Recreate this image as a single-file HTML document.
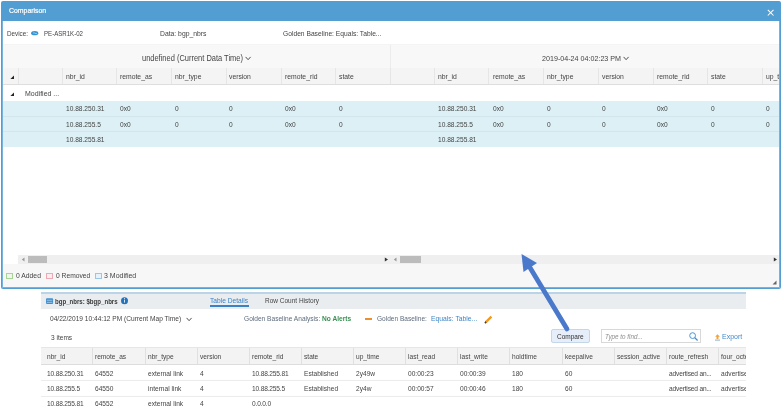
<!DOCTYPE html>
<html><head><meta charset="utf-8"><style>
html,body{margin:0;padding:0;width:783px;height:409px;overflow:hidden;background:#fff;}
body{position:relative;font-family:"Liberation Sans",sans-serif;}
.b{position:absolute;}
.t{position:absolute;white-space:nowrap;line-height:10px;height:10px;transform:translateZ(0) scaleX(0.9091);transform-origin:0 50%;}
.clip{position:absolute;overflow:hidden;}
</style></head><body>
<div class='b' style='left:1px;top:1px;width:780px;height:288px;background:#529dd2;border-radius:2px'></div>
<div class='b' style='left:3px;top:21px;width:776px;height:266px;background:#fff'></div>
<div class='b' style='left:2px;top:21px;width:1px;height:267px;background:#78b3df'></div>
<div class='b' style='left:779px;top:21px;width:1px;height:267px;background:#78b3df'></div>
<div class='b' style='left:2px;top:287px;width:778px;height:1px;background:#78b3df'></div>
<div class='t' id='title' style='left:9px;top:6.3px;font-size:7.59px;color:#fff;font-weight:400;-webkit-text-stroke:0.2px #fff'>Comparison</div>
<svg class='b' style='left:767px;top:9px' width='8' height='8' viewBox='0 0 8 8'><path d='M0.8 0.8L6.5 6.5M6.5 0.8L0.8 6.5' stroke='#fff' stroke-width='1.05'/></svg>
<div class='t' id='dev' style='left:7px;top:28.5px;font-size:6.93px;color:#444;font-weight:400;'>Device:</div>
<svg class='b' style='left:30.7px;top:31.3px' width='8' height='5' viewBox='0 0 8 5'><ellipse cx='3.7' cy='2.2' rx='3.6' ry='2.1' fill='#3794d4'/><path d='M2 2.2q1-1 2 0t2 0' fill='none' stroke='#cfe7f7' stroke-width='0.6'/></svg>
<div class='t' id='pe' style='left:44px;top:28.5px;font-size:6.71px;color:#444;font-weight:400;'>PE-ASR1K-02</div>
<div class='t' id='data' style='left:159.6px;top:28.8px;font-size:7.48px;color:#444;font-weight:400;'>Data: bgp_nbrs</div>
<div class='t' id='gb' style='left:282.5px;top:28.8px;font-size:7.37px;color:#444;font-weight:400;'>Golden Baseline: Equals: Table...</div>
<div class='b' style='left:3px;top:44px;width:776px;height:24px;background:#f8f8f8;border-top:1px solid #f4f4f4;box-sizing:border-box'></div>
<div class='b' style='left:390px;top:45px;width:1px;height:23px;background:#ececec'></div>
<div class='t' id='undef' style='left:142px;top:53.6px;font-size:8.23px;color:#444;font-weight:400;'>undefined (Current Data Time)</div>
<svg class='b' style='left:244.5px;top:56.4px' width='7' height='5' viewBox='0 0 7 5'><path d='M0.6 0.9L3.1 3.7L5.6 0.9' fill='none' stroke='#505050' stroke-width='1'/></svg>
<div class='t' id='date2' style='left:542px;top:53.8px;font-size:7.87px;color:#444;font-weight:400;'>2019-04-24 04:02:23 PM</div>
<svg class='b' style='left:622.8px;top:56.3px' width='7' height='5' viewBox='0 0 7 5'><path d='M0.6 0.9L3.1 3.7L5.6 0.9' fill='none' stroke='#505050' stroke-width='1'/></svg>
<div class='b' style='left:3px;top:68px;width:776px;height:16px;background:#f4f4f4'></div>
<div class='b' style='left:3px;top:84px;width:776px;height:1px;background:#dedede'></div>
<div class='b' style='left:18px;top:68px;width:1px;height:16px;background:#e6e6e6'></div>
<div class='b' style='left:62px;top:68px;width:1px;height:16px;background:#e6e6e6'></div>
<div class='b' style='left:116px;top:68px;width:1px;height:16px;background:#e6e6e6'></div>
<div class='b' style='left:171px;top:68px;width:1px;height:16px;background:#e6e6e6'></div>
<div class='b' style='left:226px;top:68px;width:1px;height:16px;background:#e6e6e6'></div>
<div class='b' style='left:281px;top:68px;width:1px;height:16px;background:#e6e6e6'></div>
<div class='b' style='left:335px;top:68px;width:1px;height:16px;background:#e6e6e6'></div>
<div class='b' style='left:390px;top:68px;width:1px;height:16px;background:#e6e6e6'></div>
<div class='b' style='left:434px;top:68px;width:1px;height:16px;background:#e6e6e6'></div>
<div class='b' style='left:488px;top:68px;width:1px;height:16px;background:#e6e6e6'></div>
<div class='b' style='left:543px;top:68px;width:1px;height:16px;background:#e6e6e6'></div>
<div class='b' style='left:598px;top:68px;width:1px;height:16px;background:#e6e6e6'></div>
<div class='b' style='left:653px;top:68px;width:1px;height:16px;background:#e6e6e6'></div>
<div class='b' style='left:707px;top:68px;width:1px;height:16px;background:#e6e6e6'></div>
<div class='b' style='left:762px;top:68px;width:1px;height:16px;background:#e6e6e6'></div>
<svg class='b' style='left:9.5px;top:75px' width='5' height='5' viewBox='0 0 5 5'><path d='M4 0.4V4H0.4Z' fill='#222'/></svg>
<div class='t' style='left:66px;top:71.7px;font-size:7.48px;color:#444;font-weight:400;'>nbr_id</div>
<div class='t' style='left:120px;top:71.7px;font-size:7.48px;color:#444;font-weight:400;'>remote_as</div>
<div class='t' style='left:174.7px;top:71.7px;font-size:7.48px;color:#444;font-weight:400;'>nbr_type</div>
<div class='t' style='left:229px;top:71.7px;font-size:7.48px;color:#444;font-weight:400;'>version</div>
<div class='t' style='left:284.5px;top:71.7px;font-size:7.48px;color:#444;font-weight:400;'>remote_rid</div>
<div class='t' style='left:338.7px;top:71.7px;font-size:7.48px;color:#444;font-weight:400;'>state</div>
<div class='clip' style='left:0;top:0;width:779px;height:200px'>
<div class='t' style='left:438px;top:71.7px;font-size:7.48px;color:#444;font-weight:400;'>nbr_id</div>
<div class='t' style='left:492.5px;top:71.7px;font-size:7.48px;color:#444;font-weight:400;'>remote_as</div>
<div class='t' style='left:547.2px;top:71.7px;font-size:7.48px;color:#444;font-weight:400;'>nbr_type</div>
<div class='t' style='left:602px;top:71.7px;font-size:7.48px;color:#444;font-weight:400;'>version</div>
<div class='t' style='left:656.5px;top:71.7px;font-size:7.48px;color:#444;font-weight:400;'>remote_rid</div>
<div class='t' style='left:711px;top:71.7px;font-size:7.48px;color:#444;font-weight:400;'>state</div>
<div class='t' style='left:766px;top:71.7px;font-size:7.48px;color:#444;font-weight:400;'>up_time</div>
</div>
<svg class='b' style='left:9.5px;top:91.6px' width='5' height='5' viewBox='0 0 5 5'><path d='M4 0.4V4H0.4Z' fill='#222'/></svg>
<div class='t' id='mod' style='left:25px;top:88.6px;font-size:7.70px;color:#444;font-weight:400;'>Modified ...</div>
<div class='b' style='left:3px;top:101px;width:776px;height:46px;background:#dcf0f6'></div>
<div class='b' style='left:3px;top:116px;width:776px;height:1px;background:#d3e6ee'></div>
<div class='b' style='left:3px;top:131px;width:776px;height:1px;background:#d3e6ee'></div>
<div class='t' style='left:66px;top:104.0px;font-size:7.26px;color:#444;font-weight:400;'>10.88.250.31</div>
<div class='t' style='left:120px;top:104.0px;font-size:7.26px;color:#444;font-weight:400;'>0x0</div>
<div class='t' style='left:174.7px;top:104.0px;font-size:7.26px;color:#444;font-weight:400;'>0</div>
<div class='t' style='left:229px;top:104.0px;font-size:7.26px;color:#444;font-weight:400;'>0</div>
<div class='t' style='left:284.5px;top:104.0px;font-size:7.26px;color:#444;font-weight:400;'>0x0</div>
<div class='t' style='left:338.7px;top:104.0px;font-size:7.26px;color:#444;font-weight:400;'>0</div>
<div class='clip' style='left:0;top:0;width:779px;height:200px'>
<div class='t' style='left:438px;top:104.0px;font-size:7.26px;color:#444;font-weight:400;'>10.88.250.31</div>
<div class='t' style='left:492.5px;top:104.0px;font-size:7.26px;color:#444;font-weight:400;'>0x0</div>
<div class='t' style='left:547.2px;top:104.0px;font-size:7.26px;color:#444;font-weight:400;'>0</div>
<div class='t' style='left:602px;top:104.0px;font-size:7.26px;color:#444;font-weight:400;'>0</div>
<div class='t' style='left:656.5px;top:104.0px;font-size:7.26px;color:#444;font-weight:400;'>0x0</div>
<div class='t' style='left:711px;top:104.0px;font-size:7.26px;color:#444;font-weight:400;'>0</div>
<div class='t' style='left:766px;top:104.0px;font-size:7.26px;color:#444;font-weight:400;'>0</div>
</div>
<div class='t' style='left:66px;top:119.5px;font-size:7.26px;color:#444;font-weight:400;'>10.88.255.5</div>
<div class='t' style='left:120px;top:119.5px;font-size:7.26px;color:#444;font-weight:400;'>0x0</div>
<div class='t' style='left:174.7px;top:119.5px;font-size:7.26px;color:#444;font-weight:400;'>0</div>
<div class='t' style='left:229px;top:119.5px;font-size:7.26px;color:#444;font-weight:400;'>0</div>
<div class='t' style='left:284.5px;top:119.5px;font-size:7.26px;color:#444;font-weight:400;'>0x0</div>
<div class='t' style='left:338.7px;top:119.5px;font-size:7.26px;color:#444;font-weight:400;'>0</div>
<div class='clip' style='left:0;top:0;width:779px;height:200px'>
<div class='t' style='left:438px;top:119.5px;font-size:7.26px;color:#444;font-weight:400;'>10.88.255.5</div>
<div class='t' style='left:492.5px;top:119.5px;font-size:7.26px;color:#444;font-weight:400;'>0x0</div>
<div class='t' style='left:547.2px;top:119.5px;font-size:7.26px;color:#444;font-weight:400;'>0</div>
<div class='t' style='left:602px;top:119.5px;font-size:7.26px;color:#444;font-weight:400;'>0</div>
<div class='t' style='left:656.5px;top:119.5px;font-size:7.26px;color:#444;font-weight:400;'>0x0</div>
<div class='t' style='left:711px;top:119.5px;font-size:7.26px;color:#444;font-weight:400;'>0</div>
<div class='t' style='left:766px;top:119.5px;font-size:7.26px;color:#444;font-weight:400;'>0</div>
</div>
<div class='t' style='left:66px;top:135.3px;font-size:7.26px;color:#444;font-weight:400;'>10.88.255.81</div>
<div class='clip' style='left:0;top:0;width:779px;height:200px'>
<div class='t' style='left:438px;top:135.3px;font-size:7.26px;color:#444;font-weight:400;'>10.88.255.81</div>
</div>
<div class='b' style='left:18px;top:255px;width:761px;height:9px;background:#efefef'></div>
<svg class='b' style='left:21px;top:257px' width='4' height='5' viewBox='0 0 4 5'><path d='M3.5 0.5V4.5L0.8 2.5Z' fill='#999'/></svg>
<div class='b' style='left:28px;top:256px;width:19px;height:7px;background:#bcbcbc'></div>
<svg class='b' style='left:384px;top:257px' width='5' height='5' viewBox='0 0 5 5'><path d='M0.8 0.5V4.5L4 2.5Z' fill='#333'/></svg>
<svg class='b' style='left:393px;top:257px' width='4' height='5' viewBox='0 0 4 5'><path d='M3.5 0.5V4.5L0.8 2.5Z' fill='#999'/></svg>
<div class='b' style='left:400px;top:256px;width:21px;height:7px;background:#bcbcbc'></div>
<svg class='b' style='left:773px;top:257px' width='5' height='5' viewBox='0 0 5 5'><path d='M0.8 0.5V4.5L4 2.5Z' fill='#333'/></svg>
<div class='b' style='left:3px;top:264px;width:776px;height:23px;background:#f7f7f7'></div>
<div class='b' style='left:6px;top:273px;width:7px;height:6px;border:1px solid #a8d596;background:#eef7ea;box-sizing:border-box'></div>
<div class='t' id='added' style='left:15.7px;top:271.1px;font-size:7.48px;color:#444;font-weight:400;'>0 Added</div>
<div class='b' style='left:46px;top:273px;width:7px;height:6px;border:1px solid #eeaab2;background:#fbedef;box-sizing:border-box'></div>
<div class='t' id='removed' style='left:55.6px;top:271.1px;font-size:7.37px;color:#444;font-weight:400;'>0 Removed</div>
<div class='b' style='left:95px;top:273px;width:7px;height:6px;border:1px solid #9cc6e6;background:#e8f2fa;box-sizing:border-box'></div>
<div class='t' id='modified' style='left:104.4px;top:271.1px;font-size:7.70px;color:#444;font-weight:400;'>3 Modified</div>
<svg class='b' style='left:772px;top:280px' width='5' height='5' viewBox='0 0 5 5'><path d='M4.5 0.5V4.5H0.5Z' fill='#666'/></svg>
<div class='b' style='left:41px;top:292px;width:705px;height:2px;background:#b9d3e9'></div>
<div class='b' style='left:41px;top:294px;width:705px;height:15px;background:#e9edf0'></div>
<svg class='b' style='left:46px;top:298px' width='8' height='7' viewBox='0 0 8 7'><rect x='0' y='0.3' width='7.1' height='5.8' fill='#3f90d1' rx='1'/><path d='M0.8 2.3h5.5M0.8 4.4h5.5' stroke='#cfe4f5' stroke-width='0.6'/></svg>
<div class='t' id='bgp' style='left:54.6px;top:296.6px;font-size:6.71px;color:#3a3a3a;font-weight:700;'>bgp_nbrs: $bgp_nbrs</div>
<svg class='b' style='left:120px;top:296px' width='9' height='9' viewBox='0 0 9 9'><circle cx='4.5' cy='4.7' r='3.5' fill='#2472ba'/><path d='M4.5 3.6v3' stroke='#e8f2fa' stroke-width='0.9'/><circle cx='4.5' cy='2.6' r='0.5' fill='#e8f2fa'/></svg>
<div class='t' id='td' style='left:210px;top:295.7px;font-size:7.32px;color:#3a82c4;font-weight:400;'>Table Details</div>
<div class='b' style='left:210px;top:305px;width:39px;height:2px;background:#3a82c4'></div>
<div class='t' id='rch' style='left:264.5px;top:295.8px;font-size:7.15px;color:#444;font-weight:400;'>Row Count History</div>
<div class='t' id='maptime' style='left:49.8px;top:314.1px;font-size:7.26px;color:#444;font-weight:400;'>04/22/2019 10:44:12 PM (Current Map Time)</div>
<svg class='b' style='left:185.6px;top:316.8px' width='7' height='5' viewBox='0 0 7 5'><path d='M0.6 0.9L3.1 3.7L5.6 0.9' fill='none' stroke='#505050' stroke-width='1'/></svg>
<div class='t' id='gba' style='left:243.6px;top:314.4px;font-size:7.26px;color:#5d6c7c;font-weight:400;'>Golden Baseline Analysis: <b style='color:#3b8f55'>No Alerts</b></div>
<div class='b' style='left:365.3px;top:318px;width:6.5px;height:2px;background:#ec8f2c'></div>
<div class='t' id='gbl' style='left:376.8px;top:314.3px;font-size:7.21px;color:#5d6c7c;font-weight:400;'>Golden Baseline:</div>
<div class='t' id='eq' style='left:431.2px;top:314.3px;font-size:7.48px;color:#3f86c6;font-weight:400;'>Equals: Table...</div>
<svg class='b' style='left:484px;top:315px' width='9' height='9' viewBox='0 0 9 9'><path d='M1.6 7.4L7.4 1.6' stroke='#f29a1c' stroke-width='2.3'/><path d='M0.9 8.1L2.1 6.9' stroke='#3a3a3a' stroke-width='1.5'/></svg>
<div class='t' id='items' style='left:50.6px;top:333.0px;font-size:7.21px;color:#444;font-weight:400;'>3 items</div>
<div class='b' style='left:551px;top:329px;width:39px;height:14px;background:#e6eef9;border:1px solid #c3d6ea;box-sizing:border-box;border-radius:2px'></div>
<div class='t' id='cmp' style='left:556.5px;top:331.6px;font-size:7.15px;color:#333;font-weight:400;'>Compare</div>
<div class='b' style='left:601px;top:329px;width:100px;height:14px;background:#fff;border:1px solid #d8d8d8;box-sizing:border-box'></div>
<div class='t' id='find' style='left:605.2px;top:332.2px;font-size:6.93px;color:#8e8e8e;font-weight:400;font-style:italic'>Type to find...</div>
<svg class='b' style='left:688.5px;top:332.3px' width='10' height='10' viewBox='0 0 10 10'><circle cx='3.6' cy='3.6' r='2.9' fill='none' stroke='#3f8fd4' stroke-width='0.95'/><path d='M5.8 5.8L8.6 8.4' stroke='#3f8fd4' stroke-width='1.3'/></svg>
<svg class='b' style='left:714.8px;top:333.5px' width='6' height='7' viewBox='0 0 6 7'><path d='M2.5 0.2L4.9 2.7H3.5V4.9H1.5V2.7H0.1Z' fill='#f2a43a'/><path d='M0 6.1h5' stroke='#7fb3e0' stroke-width='1'/></svg>
<div class='t' id='export' style='left:722px;top:331.8px;font-size:7.70px;color:#4389cc;font-weight:400;'>Export</div>
<div class='b' style='left:41px;top:348px;width:705px;height:16px;background:#f3f3f3'></div>
<div class='b' style='left:41px;top:347px;width:705px;height:1px;background:#e6e6e6'></div>
<div class='b' style='left:41px;top:364px;width:705px;height:1px;background:#dddddd'></div>
<div class='b' style='left:41px;top:380px;width:705px;height:1px;background:#ececec'></div>
<div class='b' style='left:41px;top:396px;width:705px;height:1px;background:#ececec'></div>
<div class='b' style='left:92px;top:348px;width:1px;height:16px;background:#e0e0e0'></div>
<div class='b' style='left:145px;top:348px;width:1px;height:16px;background:#e0e0e0'></div>
<div class='b' style='left:197px;top:348px;width:1px;height:16px;background:#e0e0e0'></div>
<div class='b' style='left:249px;top:348px;width:1px;height:16px;background:#e0e0e0'></div>
<div class='b' style='left:301px;top:348px;width:1px;height:16px;background:#e0e0e0'></div>
<div class='b' style='left:353px;top:348px;width:1px;height:16px;background:#e0e0e0'></div>
<div class='b' style='left:405px;top:348px;width:1px;height:16px;background:#e0e0e0'></div>
<div class='b' style='left:457px;top:348px;width:1px;height:16px;background:#e0e0e0'></div>
<div class='b' style='left:509px;top:348px;width:1px;height:16px;background:#e0e0e0'></div>
<div class='b' style='left:562px;top:348px;width:1px;height:16px;background:#e0e0e0'></div>
<div class='b' style='left:614px;top:348px;width:1px;height:16px;background:#e0e0e0'></div>
<div class='b' style='left:666px;top:348px;width:1px;height:16px;background:#e0e0e0'></div>
<div class='b' style='left:718px;top:348px;width:1px;height:16px;background:#e0e0e0'></div>
<div class='clip' style='left:40px;top:340px;width:706px;height:69px'>
<div class='t' style='left:6.700000000000003px;top:12.0px;font-size:7.26px;color:#444;'>nbr_id</div>
<div class='t' style='left:55px;top:12.0px;font-size:7.26px;color:#444;'>remote_as</div>
<div class='t' style='left:108px;top:12.0px;font-size:7.26px;color:#444;'>nbr_type</div>
<div class='t' style='left:160px;top:12.0px;font-size:7.26px;color:#444;'>version</div>
<div class='t' style='left:212px;top:12.0px;font-size:7.26px;color:#444;'>remote_rid</div>
<div class='t' style='left:264px;top:12.0px;font-size:7.26px;color:#444;'>state</div>
<div class='t' style='left:316px;top:12.0px;font-size:7.26px;color:#444;'>up_time</div>
<div class='t' style='left:368px;top:12.0px;font-size:7.26px;color:#444;'>last_read</div>
<div class='t' style='left:420px;top:12.0px;font-size:7.26px;color:#444;'>last_write</div>
<div class='t' style='left:472px;top:12.0px;font-size:7.26px;color:#444;'>holdtime</div>
<div class='t' style='left:525px;top:12.0px;font-size:7.26px;color:#444;'>keepalive</div>
<div class='t' style='left:577px;top:12.0px;font-size:7.26px;color:#444;'>session_active</div>
<div class='t' style='left:629px;top:12.0px;font-size:7.26px;color:#444;'>route_refresh</div>
<div class='t' style='left:681px;top:12.0px;font-size:7.26px;color:#444;'>four_octe</div>
<div class='t' style='left:6.700000000000003px;top:28.6px;font-size:7.26px;color:#444;letter-spacing:-0.18px;'>10.88.250.31</div>
<div class='t' style='left:55px;top:28.6px;font-size:7.26px;color:#444;'>64552</div>
<div class='t' style='left:108px;top:28.6px;font-size:7.26px;color:#444;'>external link</div>
<div class='t' style='left:160px;top:28.6px;font-size:7.26px;color:#444;'>4</div>
<div class='t' style='left:212px;top:28.6px;font-size:7.26px;color:#444;letter-spacing:-0.18px;'>10.88.255.81</div>
<div class='t' style='left:264px;top:28.6px;font-size:7.26px;color:#444;'>Established</div>
<div class='t' style='left:316px;top:28.6px;font-size:7.26px;color:#444;'>2y49w</div>
<div class='t' style='left:368px;top:28.6px;font-size:7.26px;color:#444;'>00:00:23</div>
<div class='t' style='left:420px;top:28.6px;font-size:7.26px;color:#444;'>00:00:39</div>
<div class='t' style='left:472px;top:28.6px;font-size:7.26px;color:#444;'>180</div>
<div class='t' style='left:525px;top:28.6px;font-size:7.26px;color:#444;'>60</div>
<div class='t' style='left:577px;top:28.6px;font-size:7.26px;color:#444;'></div>
<div class='t' style='left:629px;top:28.6px;font-size:7.26px;color:#444;letter-spacing:-0.18px;'>advertised an...</div>
<div class='t' style='left:681px;top:28.6px;font-size:7.26px;color:#444;'>advertised and received</div>
<div class='t' style='left:6.700000000000003px;top:44.0px;font-size:7.26px;color:#444;letter-spacing:-0.18px;'>10.88.255.5</div>
<div class='t' style='left:55px;top:44.0px;font-size:7.26px;color:#444;'>64550</div>
<div class='t' style='left:108px;top:44.0px;font-size:7.26px;color:#444;'>internal link</div>
<div class='t' style='left:160px;top:44.0px;font-size:7.26px;color:#444;'>4</div>
<div class='t' style='left:212px;top:44.0px;font-size:7.26px;color:#444;letter-spacing:-0.18px;'>10.88.255.5</div>
<div class='t' style='left:264px;top:44.0px;font-size:7.26px;color:#444;'>Established</div>
<div class='t' style='left:316px;top:44.0px;font-size:7.26px;color:#444;'>2y4w</div>
<div class='t' style='left:368px;top:44.0px;font-size:7.26px;color:#444;'>00:00:57</div>
<div class='t' style='left:420px;top:44.0px;font-size:7.26px;color:#444;'>00:00:46</div>
<div class='t' style='left:472px;top:44.0px;font-size:7.26px;color:#444;'>180</div>
<div class='t' style='left:525px;top:44.0px;font-size:7.26px;color:#444;'>60</div>
<div class='t' style='left:577px;top:44.0px;font-size:7.26px;color:#444;'></div>
<div class='t' style='left:629px;top:44.0px;font-size:7.26px;color:#444;letter-spacing:-0.18px;'>advertised an...</div>
<div class='t' style='left:681px;top:44.0px;font-size:7.26px;color:#444;'>advertised and received</div>
<div class='t' style='left:6.700000000000003px;top:59.2px;font-size:7.26px;color:#444;letter-spacing:-0.18px;'>10.88.255.81</div>
<div class='t' style='left:55px;top:59.2px;font-size:7.26px;color:#444;'>64552</div>
<div class='t' style='left:108px;top:59.2px;font-size:7.26px;color:#444;'>external link</div>
<div class='t' style='left:160px;top:59.2px;font-size:7.26px;color:#444;'>4</div>
<div class='t' style='left:212px;top:59.2px;font-size:7.26px;color:#444;letter-spacing:-0.18px;'>0.0.0.0</div>
</div>
<svg class='b' style='left:0;top:0' width='783' height='409' viewBox='0 0 783 409'><path d='M567 329L529 266' stroke='#4a79cc' stroke-width='4.8' stroke-linecap='round'/><path d='M521.5 254L537 263L523.5 272Z' fill='#4a79cc'/></svg>
</body></html>
